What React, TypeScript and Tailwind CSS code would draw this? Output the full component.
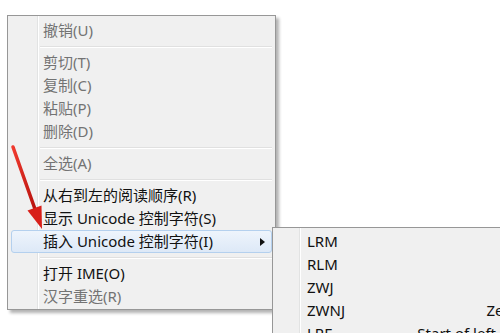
import React from 'react'

type Item = { label: string; disabled?: boolean; active?: boolean; sub?: boolean } | 'sep'

const MENU: Item[] = [
  { label: '撤销(U)', disabled: true },
  'sep',
  { label: '剪切(T)', disabled: true },
  { label: '复制(C)', disabled: true },
  { label: '粘贴(P)', disabled: true },
  { label: '删除(D)', disabled: true },
  'sep',
  { label: '全选(A)', disabled: true },
  'sep',
  { label: '从右到左的阅读顺序(R)' },
  { label: '显示 Unicode 控制字符(S)' },
  { label: '插入 Unicode 控制字符(I)', active: true, sub: true },
  'sep',
  { label: '打开 IME(O)' },
  { label: '汉字重选(R)', disabled: true },
]

const SUBMENU = [
  ['LRM', 'Left-to-right mark'],
  ['RLM', 'Right-to-left mark'],
  ['ZWJ', 'Zero width joiner'],
  ['ZWNJ', 'Zero width non-joiner'],
  ['LRE', 'Start of left-to-right embedding'],
  ['RLE', 'Start of right-to-left embedding'],
  ['LRO', 'Start of left-to-right override'],
]

export default function App() {
  return (
    <div className="relative w-[500px] h-[333px] overflow-hidden bg-white font-['Noto_Sans','Noto_Sans_CJK_SC',sans-serif] text-[15px] leading-none">
      {/* Main context menu */}
      <div className="absolute left-[7px] top-[15px] w-[269px] border border-[#979797] bg-[#f0f0f0] pt-[3px] pb-[1px] shadow-[3px_3px_3px_rgba(0,0,0,0.3)]">
        <div className="absolute left-[29px] top-0 bottom-0 w-[2px] border-l border-[#e2e3e3] border-r border-r-white" />
        {MENU.map((it, i) =>
          it === 'sep' ? (
            <div key={i} className="relative h-[9px] flex items-center pl-[32px] pr-[3px]">
              <div className="w-full h-[2px] border-t border-[#e0e0e0] border-b border-b-white" />
            </div>
          ) : it.active ? (
            <div
              key={i}
              className="relative h-[23px] mx-[3px] flex items-center pl-[31px] pr-[6px] rounded-[3px] border border-[#b4d0ee] bg-gradient-to-b from-[#eef4fc] to-[#dde9f7] text-[#111]"
            >
              <span className="flex-1 whitespace-nowrap">{it.label}</span>
              <svg width="5" height="8" viewBox="0 0 5 8">
                <polygon points="0,0 5,4 0,8" fill="#111" />
              </svg>
            </div>
          ) : (
            <div
              key={i}
              className={`relative h-[23px] flex items-center pl-[35px] whitespace-nowrap ${it.disabled ? 'text-[#737373]' : 'text-[#111]'}`}
            >
              {it.label}
            </div>
          )
        )}
      </div>

      {/* Submenu */}
      <div className="absolute left-[272px] top-[227px] w-[400px] border border-[#979797] bg-[#f0f0f0] pt-[2px]">
        <div className="absolute left-[26px] top-0 bottom-0 w-[2px] border-l border-[#e2e3e3] border-r border-r-white" />
        {SUBMENU.map(([code, desc]) => (
          <div key={code} className="relative h-[23px] flex items-center justify-between pl-[34px] pr-[32px] text-[#111] whitespace-nowrap">
            <span>{code}</span>
            <span>{desc}</span>
          </div>
        ))}
      </div>

      {/* Red annotation arrow */}
      <svg className="absolute left-0 top-0" width="500" height="333" viewBox="0 0 500 333">
        <defs>
          <linearGradient id="ar" x1="0" y1="0" x2="1" y2="0">
            <stop offset="0" stopColor="#f03a2e" />
            <stop offset="1" stopColor="#b5100c" />
          </linearGradient>
        </defs>
        <line x1="13" y1="147" x2="36" y2="212" stroke="url(#ar)" strokeWidth="3.5" strokeLinecap="round" />
        <polygon points="42,229 27.5,210.5 41.5,205.5" fill="#d8201a" />
      </svg>
    </div>
  )
}
